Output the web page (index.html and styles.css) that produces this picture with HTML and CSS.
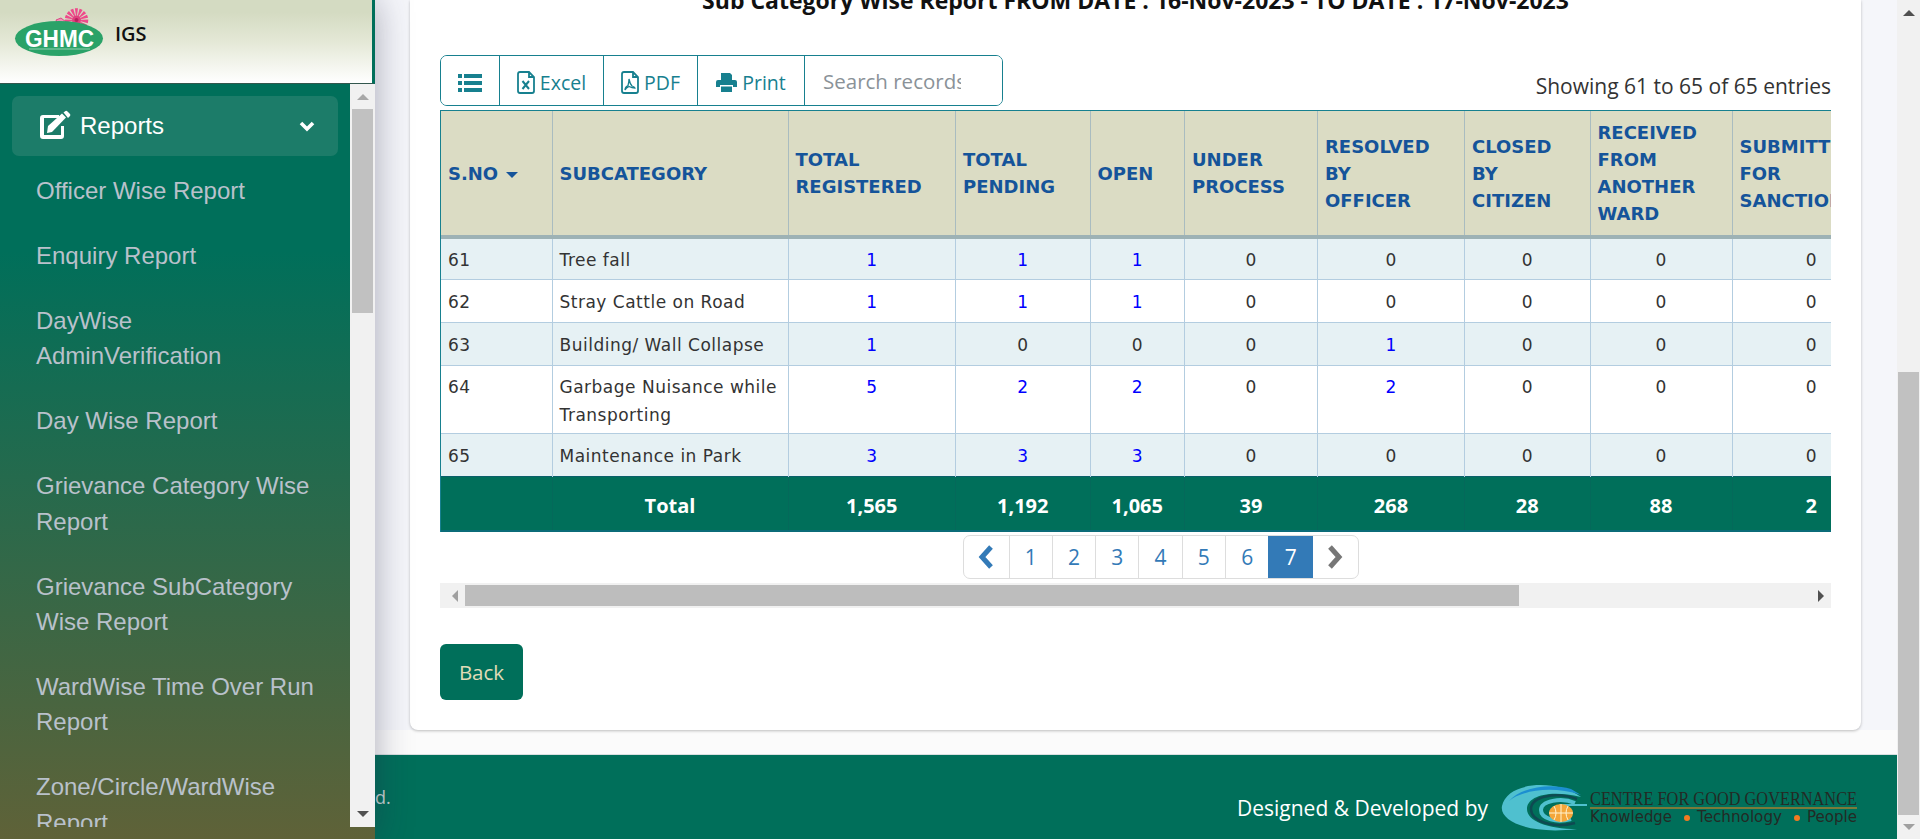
FILE: index.html
```html
<!DOCTYPE html>
<html lang="en">
<head>
<meta charset="utf-8">
<title>Sub Category Wise Report</title>
<link rel="stylesheet" href="styles.css">
</head>
<body>
<div class="app">
  <aside class="sidebar">
    <header class="brand">
      <svg class="ghmc" width="110" height="60" viewBox="0 0 110 60">
        <circle cx="76.500" cy="20" r="8" fill="none" stroke="#ee4a8b" stroke-width="7.500" stroke-dasharray="2.200 1.100"/>
        <circle cx="76.500" cy="20" r="4.500" fill="#e0417f"/>
        <circle cx="76.500" cy="20" r="2" fill="#b8205f"/>
        <path d="M56 20 L61 18 L66 22 L64 27 L58 26 Z" fill="#f28fb5" stroke="#d94a85"/>
        <ellipse cx="59" cy="38.500" rx="44" ry="17.500" fill="#2aa268"/>
        <text x="59.500" y="47" class="ghmc-text" text-anchor="middle" textLength="69" lengthAdjust="spacingAndGlyphs">GHMC</text>
        <rect x="29" y="48.500" width="61" height="1" fill="#8fd0ae"/>
      </svg>
      <span class="brand-name">IGS</span>
    </header>
    <div class="nav-wrap">
      <nav class="nav">
        <a class="nav-head">
          <svg class="nav-icon" width="31" height="27" viewBox="0 0 31 27"><path d="M3 3 H19 V6 H4 V23 H21 V14 H24 V24 Q24 27 21 27 H3 Q0 27 0 24 V6 Q0 3 3 3 Z" fill="#fff"/><path d="M8 14 L22 1.500 L26 5.500 L12 20 L7 21 Z" fill="#fff"/><path d="M23.500 0.500 L25.500 -1 Q26.500 -1.500 27.500 -0.500 L30 2 Q30.800 3 30 4 L28 6 Z" fill="#fff"/></svg>
          <span class="nav-label">Reports</span>
          <svg class="nav-caret" width="16" height="12" viewBox="0 0 16 12"><path d="M2 3 L8 9 L14 3" fill="none" stroke="#fff" stroke-width="3.600"/></svg>
        </a>
        <a class="nav-item">Officer Wise Report</a>
        <a class="nav-item">Enquiry Report</a>
        <a class="nav-item">DayWise AdminVerification</a>
        <a class="nav-item">Day Wise Report</a>
        <a class="nav-item">Grievance Category Wise Report</a>
        <a class="nav-item">Grievance SubCategory Wise Report</a>
        <a class="nav-item">WardWise Time Over Run Report</a>
        <a class="nav-item">Zone/Circle/WardWise Report</a>
      </nav>
      <div class="sb-v">
        <span class="arrow-up"></span>
        <span class="sb-v-thumb"></span>
        <span class="sb-v-rest"></span>
        <span class="arrow-down"></span>
      </div>
    </div>
  </aside>

  <div class="page">
    <main class="content">
      <section class="card">
        <h2 class="title">Sub Category Wise Report FROM DATE : 16-Nov-2023 - TO DATE : 17-Nov-2023</h2>
        <div class="tools-row">
          <div class="toolbar">
            <button class="tool tool-list"><svg width="24" height="18" viewBox="0 0 24 18" fill="#17808f"><rect y="0" width="4" height="4"/><rect y="7" width="4" height="4"/><rect y="14" width="4" height="4"/><rect x="6" y="0" width="18" height="4"/><rect x="6" y="7" width="18" height="4"/><rect x="6" y="14" width="18" height="4"/></svg></button>
            <button class="tool tool-excel"><svg width="18" height="23" viewBox="0 0 18 23"><path d="M1 3 Q1 1 3 1 H12 L17 6 V20 Q17 22 15 22 H3 Q1 22 1 20 Z M12 1 V6 H17" fill="none" stroke="#17808f" stroke-width="1.800"/><path d="M5.500 10 L12 18 M12 10 L5.500 18" stroke="#17808f" stroke-width="2"/></svg><span>Excel</span></button>
            <button class="tool tool-pdf"><svg width="18" height="23" viewBox="0 0 18 23"><path d="M1 3 Q1 1 3 1 H12 L17 6 V20 Q17 22 15 22 H3 Q1 22 1 20 Z M12 1 V6 H17" fill="none" stroke="#17808f" stroke-width="1.800"/><path d="M8 8 Q9 13 11 15 Q14 16 14 17 Q11 17 8 15.500 Q5 17 4 19 Q4 16 7 14.500 Q8 11 8 8 Z" fill="none" stroke="#17808f" stroke-width="1.300"/></svg><span>PDF</span></button>
            <button class="tool tool-print"><svg width="21" height="19" viewBox="0 0 21 19" fill="#17808f"><path d="M5 0 H14 L16 2 V7 H5 Z"/><path d="M2 7 H19 Q21 7 21 9 V14 H17 V12 H4 V14 H0 V9 Q0 7 2 7 Z"/><rect x="5" y="13.500" width="11" height="5.500"/></svg><span>Print</span></button>
            <input class="search" type="text" placeholder="Search records">
          </div>
          <div class="info">Showing 61 to 65 of 65 entries</div>
        </div>
        <div class="table-wrap">
          <table class="grid">
            <colgroup>
              <col class="w1"><col class="w2"><col class="w3"><col class="w4"><col class="w5"><col class="w6"><col class="w7"><col class="w8"><col class="w9"><col class="w10">
            </colgroup>
            <thead>
              <tr>
                <th>S.NO <span class="sort"></span></th>
                <th>SUBCATEGORY</th>
                <th>TOTAL<br>REGISTERED</th>
                <th>TOTAL<br>PENDING</th>
                <th>OPEN</th>
                <th>UNDER<br>PROCESS</th>
                <th>RESOLVED<br>BY<br>OFFICER</th>
                <th>CLOSED<br>BY<br>CITIZEN</th>
                <th>RECEIVED<br>FROM<br>ANOTHER<br>WARD</th>
                <th>SUBMITTED<br>FOR<br>SANCTION</th>
              </tr>
            </thead>
            <tbody>
              <tr class="odd"><td class="tl">61</td><td class="tl">Tree fall</td><td class="lnk">1</td><td class="lnk">1</td><td class="lnk">1</td><td>0</td><td>0</td><td>0</td><td>0</td><td>0</td></tr>
              <tr><td class="tl">62</td><td class="tl">Stray Cattle on Road</td><td class="lnk">1</td><td class="lnk">1</td><td class="lnk">1</td><td>0</td><td>0</td><td>0</td><td>0</td><td>0</td></tr>
              <tr class="odd"><td class="tl">63</td><td class="tl">Building/ Wall Collapse</td><td class="lnk">1</td><td>0</td><td>0</td><td>0</td><td class="lnk">1</td><td>0</td><td>0</td><td>0</td></tr>
              <tr class="top"><td class="tl">64</td><td class="tl">Garbage Nuisance while Transporting</td><td class="lnk">5</td><td class="lnk">2</td><td class="lnk">2</td><td>0</td><td class="lnk">2</td><td>0</td><td>0</td><td>0</td></tr>
              <tr class="odd"><td class="tl">65</td><td class="tl">Maintenance in Park</td><td class="lnk">3</td><td class="lnk">3</td><td class="lnk">3</td><td>0</td><td>0</td><td>0</td><td>0</td><td>0</td></tr>
            </tbody>
            <tfoot>
              <tr><td></td><td>Total</td><td>1,565</td><td>1,192</td><td>1,065</td><td>39</td><td>268</td><td>28</td><td>88</td><td>2</td></tr>
            </tfoot>
          </table>
        </div>
        <ul class="pager">
          <li class="pg"><svg width="16" height="24" viewBox="0 0 16 24"><path d="M13 2 L4 12 L13 22" fill="none" stroke="#337ab7" stroke-width="5"/></svg></li>
          <li class="pg">1</li><li class="pg">2</li><li class="pg">3</li><li class="pg">4</li><li class="pg">5</li><li class="pg">6</li>
          <li class="pg pg-on">7</li>
          <li class="pg"><svg width="16" height="24" viewBox="0 0 16 24"><path d="M3 2 L12 12 L3 22" fill="none" stroke="#777" stroke-width="5"/></svg></li>
        </ul>
        <div class="sb-h">
          <span class="arrow-left"></span>
          <span class="sb-h-thumb"></span>
          <span class="sb-h-rest"></span>
          <span class="arrow-right"></span>
        </div>
        <button class="back">Back</button>
      </section>
    </main>
    <footer class="footer">
      <span class="rights">d.</span>
      <span class="credit">Designed &amp; Developed by</span>
      <svg class="cgg" width="358" height="50" viewBox="0 0 358 50">
        <path d="M80 12 C56 -6 6 -4 1 21 C-2 36 28 50 76 44 C46 44 26 36 26 24 C26 12 46 4 80 12 Z" fill="#4fc0cf"/>
        <path d="M70 4 C50 -2 20 2 8 16 C20 6 50 0 80 10 Z" fill="#1c8fd0"/>
        <path d="M76 14 C54 6 30 12 30 24 C30 36 52 44 74 38" fill="none" stroke="#0e4a52" stroke-width="2.500"/>
        <path d="M74 18 C60 12 40 16 40 25 C40 34 56 38 70 34" fill="none" stroke="#4fc0cf" stroke-width="4"/>
        <path d="M66 22 C56 20 50 23 50 27 C50 31 56 34 64 32" fill="none" stroke="#0e4a52" stroke-width="2"/>
        <path d="M58 20 H86" stroke="#4fc0cf" stroke-width="2"/>
        <ellipse cx="60" cy="28" rx="12" ry="9" fill="#f4a63a"/>
        <path d="M48 28 H72 M60 19 V37 M53 21 Q57 28 53 35 M67 21 Q63 28 67 35" stroke="#fff3d0" fill="none" stroke-width="1"/>
        <text x="89" y="20" class="cgg-name" textLength="267" lengthAdjust="spacingAndGlyphs">CENTRE FOR GOOD GOVERNANCE</text>
        <rect x="89" y="22" width="267" height="2" fill="#7a7a3a"/>
        <text x="89" y="37" class="cgg-tag" textLength="82" lengthAdjust="spacingAndGlyphs">Knowledge</text>
        <circle cx="186" cy="33" r="3" fill="#f47a20"/>
        <text x="196" y="37" class="cgg-tag" textLength="85" lengthAdjust="spacingAndGlyphs">Technology</text>
        <circle cx="296" cy="33" r="3" fill="#f47a20"/>
        <text x="306" y="37" class="cgg-tag" textLength="50" lengthAdjust="spacingAndGlyphs">People</text>
      </svg>
    </footer>
  </div>

  <div class="sb-page">
    <span class="arrow-up"></span>
    <span class="sb-page-rest"></span>
    <span class="sb-page-thumb"></span>
    <span class="arrow-down"></span>
  </div>
</div>
</body>
</html>
```
FILE: styles.css
```css
* { box-sizing: border-box; }
html, body { margin: 0; padding: 0; height: 100%; overflow: hidden; }
body { font-family: "Open Sans", "Liberation Sans", sans-serif; color: #222; background: #f5f6fa; }
.app { display: flex; height: 839px; width: 1920px; overflow: hidden; }

/* sidebar */
.sidebar { width: 375px; flex: none; display: flex; flex-direction: column; position: relative; z-index: 2;
  box-shadow: 0 0 34px rgba(40, 40, 70, .38); background: linear-gradient(#006f5a 30%, #5f6238 100%); padding-bottom: 12px; }
.brand { height: 83.500px; flex: none; display: flex; align-items: flex-start; padding: 0; border-right: 3px solid #006f5a;
  background: linear-gradient(#d4dbc2 15%, #e4e8d6 50%, #fff 100%); border-bottom: 1px solid #33574e; }
.ghmc { flex: none; overflow: visible; }
.ghmc-text { font: 700 24px "Liberation Sans", sans-serif; fill: #fff; }
.brand-name { margin: 20px 0 0 5px; font: 600 20px/28px "Open Sans", sans-serif; color: #111; }
.nav-wrap { flex: 1; min-height: 0; display: flex; overflow: hidden; }
.nav { flex: 1; min-width: 0; overflow: hidden; padding-top: 12px; font-family: "Liberation Sans", Arial, sans-serif; }
.nav-head { display: flex; align-items: center; height: 60px; margin: 0 12px 3px; padding: 0 23px 0 28px; border-radius: 7px; background: #1c7c69; color: #fff; font-size: 24px; }
.nav-icon { flex: none; overflow: visible; }
.nav-label { flex: 1; margin-left: 9px; }
.nav-item { display: block; padding: 14.700px 32px 14.700px 36px; line-height: 35.500px; font-size: 24px; color: #b9c1cb; }

.sb-v { width: 25px; flex: none; display: flex; flex-direction: column; align-items: center; background: #f1f1f1; }
.sb-v-thumb { width: 21px; height: 204px; background: #c1c1c1; flex: none; }
.sb-v-rest { flex: 1; }
.arrow-up, .arrow-down, .arrow-left, .arrow-right { flex: none; width: 0; height: 0; border-style: solid; border-color: transparent; }
.arrow-up { margin: 10px 0 9px; border-width: 0 6px 6px; border-bottom-color: #a8a8a8; }
.arrow-down { margin: 8px 0 10px; border-width: 6px 6px 0; border-top-color: #505050; }

/* main */
.page { flex: 1; min-width: 0; display: flex; flex-direction: column; }
.content { flex: 1; min-height: 0; padding: 0 36px 0 35px; background: linear-gradient(#f5f6fa 730px, #fbfbfb 730px); }
.card { height: 730px; background: #fff; border-radius: 0 0 8px 8px; box-shadow: 0 1px 3px rgba(0, 0, 0, .25); padding: 0 30px; overflow: hidden; }
.title { margin: -12px 0 0; text-align: center; font: 700 23px/24px "Open Sans", sans-serif; color: #111; white-space: nowrap; }
.tools-row { display: flex; justify-content: space-between; align-items: flex-end; margin-top: 43px; height: 51px; }
.toolbar { display: flex; width: 563px; height: 51px; border: 1px solid #17808f; border-radius: 7px; overflow: hidden; }
.tool { display: flex; align-items: center; justify-content: center; gap: 5px; border: 0; border-right: 1px solid #17808f; background: #fff; padding: 4px 0 0; color: #17808f; font: 19.500px "Open Sans", sans-serif; height: 100%; }
.tool-list { width: 59px; }
.tool-excel { width: 104px; }
.tool-pdf { width: 94px; }
.tool-print { width: 107px; }
.search { flex: 1; min-width: 0; border: 0; outline: 0; padding: 0 41px 0 18px; font: 20.500px "Open Sans", sans-serif; color: #777; }
.search::placeholder { color: #8a9298; opacity: 1; }
.info { font: 21px/30px "Open Sans", sans-serif; color: #333; padding-bottom: 5px; }

.table-wrap { margin-top: 4px; height: 422px; overflow: hidden; border-top: 1.500px solid #17808f; border-left: 1px solid #17808f; }
.grid { border-collapse: collapse; table-layout: fixed; width: 1449px; font-family: "DejaVu Sans", "Noto Sans", sans-serif; font-size: 17px; }
.w1 { width: 111px; } .w2 { width: 236px; } .w3 { width: 167.500px; } .w4 { width: 134.500px; } .w5 { width: 94.500px; }
.w6 { width: 133px; } .w7 { width: 147px; } .w8 { width: 125.500px; } .w9 { width: 142px; } .w10 { width: 158px; }
.grid th { height: 126px; background: #dbdcc4; color: #15549a; font-size: 18px; font-weight: 700; line-height: 27px; text-align: left; padding: 0 7px; white-space: nowrap; overflow: hidden;
  border-left: 1px solid #a9bcc0; border-bottom: 4px solid #9db2b5; }
.grid th:first-child, .grid td:first-child { border-left: 0; }
.grid td { height: 42.800px; text-align: center; padding: 2px 7px 0; color: #333; border-left: 1px solid #b3cde0; border-bottom: 1px solid #b3cde0; line-height: 28px; }
.grid td.tl { text-align: left; letter-spacing: .5px; }
.grid td.lnk { color: #0000ff; }
.grid tbody .odd td { background: #e6f1f4; }
.grid tbody .top td { vertical-align: top; padding-top: 7px; height: 68.500px; }
.grid tbody tr:last-child td { border-bottom: 0; }
.grid tfoot td { height: 54px; padding-top: 5px; background: #006f5a; color: #fff; font-family: "Open Sans", sans-serif; font-weight: 700; font-size: 20px; border-left: 1px solid #04695a; border-top: 1px solid #0a5f6a; border-bottom: 2px solid #0b6c78; }
.sort { display: inline-block; width: 0; height: 0; margin-left: 2px; vertical-align: middle; border-style: solid; border-width: 6px 6px 0; border-color: #15549a transparent transparent; }

.pager { display: flex; list-style: none; width: 396px; height: 44px; margin: 3px 0 0 522.500px; padding: 0; border: 1px solid #ddd; border-radius: 7px; overflow: hidden; font: 21px "Open Sans", sans-serif; color: #337ab7; }
.pg { width: 43.300px; flex: none; display: flex; align-items: center; justify-content: center; border-left: 1px solid #ddd; }
.pg:first-child { border-left: 0; width: 45px; }
.pg-on { background: #337ab7; color: #fff; width: 45px; border-left: 0; }
.pg:last-child { flex: 1; border-left: 0; }

.sb-h { display: flex; align-items: center; width: 1391px; height: 25px; margin-top: 4px; background: #f1f1f1; }
.sb-h-thumb { width: 1054px; height: 21px; background: #bdbdbd; flex: none; }
.sb-h-rest { flex: 1; }
.arrow-left { margin: 0 7px 0 12px; border-width: 6px 6px 6px 0; border-right-color: #a0a0a0; }
.arrow-right { margin: 0 7px 0 12px; border-width: 6px 0 6px 6px; border-left-color: #505050; }
.back { display: block; margin-top: 36px; width: 83px; height: 56px; border: 0; border-radius: 6px; background: #006f5a; color: #e0dcb8; font: 20.500px "Open Sans", sans-serif; padding: 0; }

.footer { height: 85px; flex: none; display: flex; align-items: center; background: #006f5a; border-top: 1px solid #d8dfe0; padding-right: 38px; }
.rights { flex: none; white-space: nowrap; font: 18px "Open Sans", sans-serif; color: #c6d4d2; }
.credit { margin-left: auto; flex: none; font: 21px "Open Sans", sans-serif; color: #fff; padding-top: 22px; }
.cgg { margin-left: 13px; margin-top: 25px; flex: none; overflow: visible; }
.cgg-name { font: 400 19px "Liberation Serif", serif; fill: #232a25; }
.cgg-tag { font: 400 15px "DejaVu Sans", sans-serif; fill: #232a25; }

.sb-page { width: 23px; flex: none; display: flex; flex-direction: column; align-items: center; background: #f1f1f1; }
.sb-page .arrow-up { border-bottom-color: #505050; }
.sb-page .arrow-down { border-top-color: #a0a0a0; margin: 9px 0; }
.sb-page-rest { flex: none; height: 347px; }
.sb-page-thumb { flex: 1; width: 21px; background: #c1c1c1; }
```
